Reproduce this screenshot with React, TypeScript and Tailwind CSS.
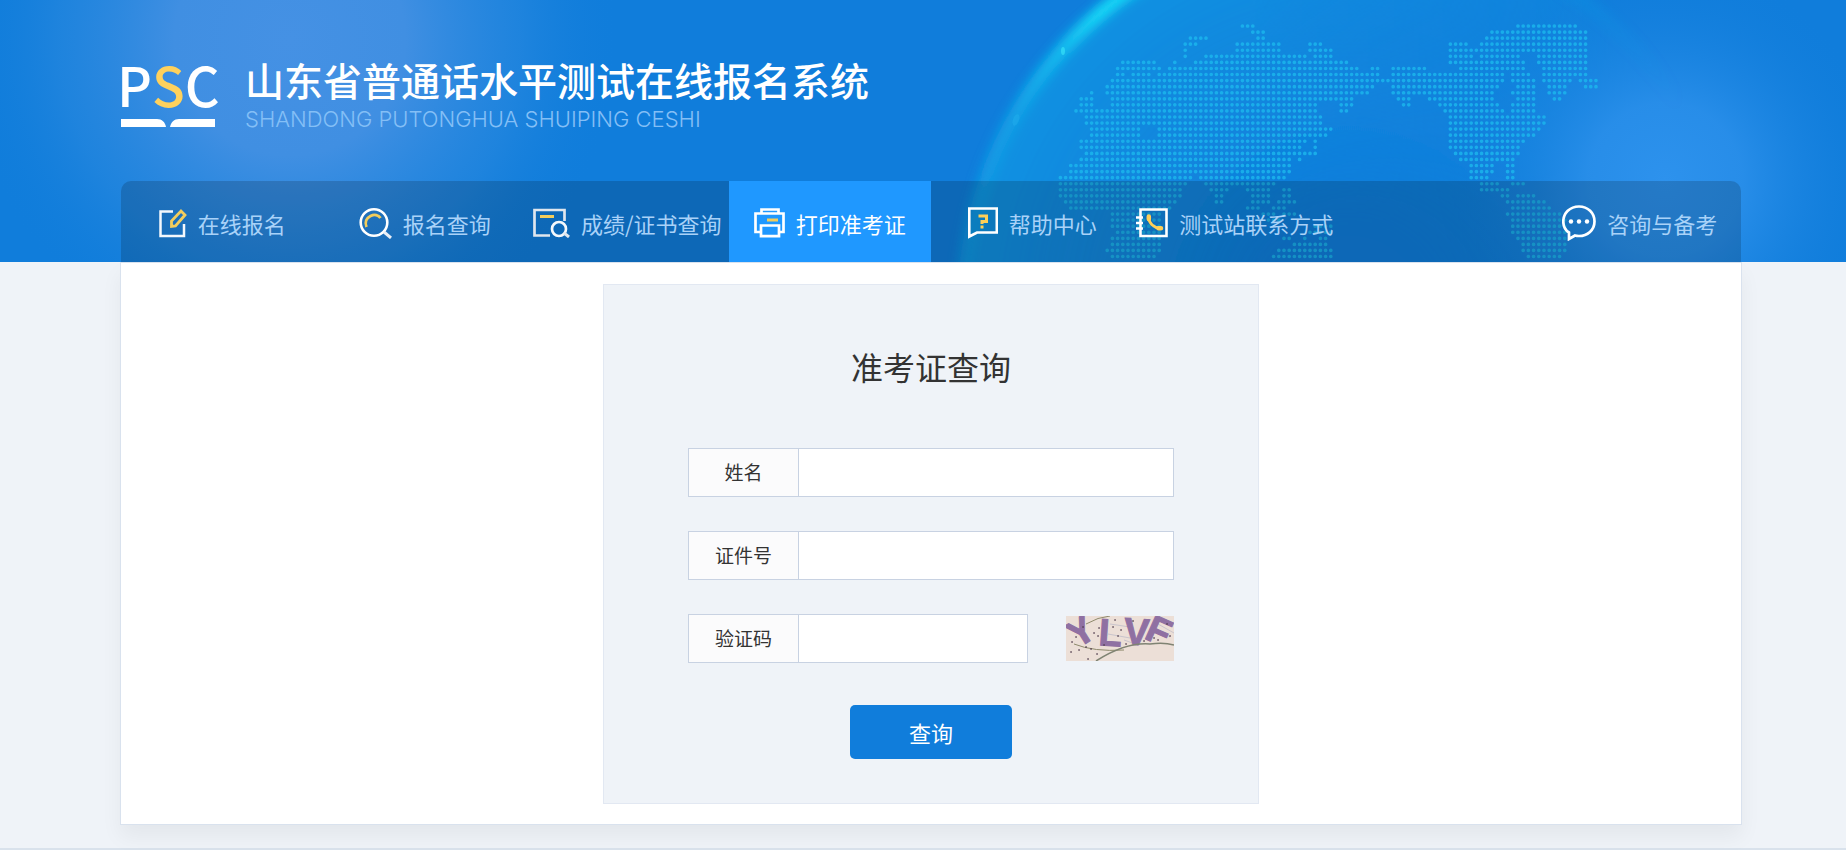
import React from 'react';

type Run = [number, number];

// dotted world map, one entry per row of dots: [first x, last x] of each run
const mapRows: Run[][] = [
  [[575, 615], [1400, 1580]],
  [[605, 645], [1324, 1605]],
  [[415, 470], [620, 645], [1317, 1605]],
  [[400, 440], [562, 688], [775, 815], [1207, 1243], [1297, 1384], [1411, 1609]],
  [[400, 405], [562, 688], [780, 845], [1207, 1277], [1297, 1397], [1424, 1612]],
  [[400, 405], [472, 500], [518, 760], [790, 845], [1207, 1270], [1297, 1411], [1464, 1612]],
  [[215, 318], [370, 375], [430, 885], [1196, 1283], [1297, 1417], [1464, 1612]],
  [[200, 335], [355, 920], [965, 990], [1036, 1123], [1230, 1424], [1478, 1605]],
  [[200, 225], [245, 300], [335, 980], [1036, 1364], [1384, 1437], [1484, 1605]],
  [[185, 250], [265, 1364], [1384, 1451], [1484, 1558], [1594, 1638]],
  [[168, 230], [245, 970], [1036, 1344], [1397, 1444], [1491, 1545], [1604, 1638]],
  [[120, 125], [168, 950], [1036, 1330], [1391, 1444], [1498, 1538]],
  [[88, 130], [180, 865], [875, 905], [1049, 1083], [1143, 1330], [1397, 1451], [1511, 1528]],
  [[88, 130], [180, 800], [870, 900], [1067, 1072], [1167, 1344], [1391, 1457]],
  [[72, 790], [875, 890], [1183, 1364], [1391, 1457]],
  [[103, 810], [1196, 1478]],
  [[103, 810], [1196, 1478]],
  [[118, 270], [320, 790], [800, 835], [1207, 1464]],
  [[118, 265], [335, 775], [790, 825], [1207, 1444]],
  [[88, 740], [750, 760], [790, 795], [1207, 1417]],
  [[88, 755], [790, 795], [1207, 1397]],
  [[103, 715], [735, 800], [1217, 1397]],
  [[88, 715], [750, 755], [1237, 1391]],
  [[55, 715], [1259, 1324], [1377, 1387]],
  [[55, 375], [395, 715], [1259, 1324], [1377, 1387]],
  [[38, 420], [460, 700], [1259, 1317], [1380, 1390]],
  [[38, 400], [475, 665], [1290, 1337], [1391, 1417]],
  [[38, 385], [485, 535], [590, 650], [705, 715], [1297, 1371]],
  [[38, 385], [500, 520], [605, 650], [705, 725], [1364, 1370], [1397, 1457]],
  [[50, 380], [500, 520], [605, 650], [680, 740], [1377, 1478]],
  [[70, 365], [590, 620], [670, 700], [1384, 1498]],
  [[180, 330], [640, 670], [700, 730], [1377, 1524]],
  [[180, 330], [660, 690], [1384, 1545]],
  [[180, 330], [800, 850], [1384, 1545]],
  [[195, 330], [780, 840], [1391, 1551]],
  [[185, 325], [705, 725], [765, 770], [805, 830], [1404, 1551]],
  [[190, 325], [735, 825], [1417, 1545]],
  [[175, 320], [690, 835], [1427, 1545]],
  [[190, 310], [675, 840], [1431, 1531]],
];

const STEP_X = 15.6;
const STEP_Y = 18.2;

const mapPath = mapRows
  .map((runs, row) =>
    runs
      .map(([from, to]) => {
        const first = Math.round(from / STEP_X);
        const last = Math.max(first, Math.round(to / STEP_X));
        let d = '';
        for (let col = first; col <= last; col++) {
          d += `M${(col * STEP_X).toFixed(1)} ${(18 + row * STEP_Y).toFixed(1)}h.1`;
        }
        return d;
      })
      .join('')
  )
  .join('');

const HeaderArt: React.FC = () => (
  <svg className="absolute inset-0 h-full w-full" viewBox="0 0 1846 262" preserveAspectRatio="xMidYMin slice" aria-hidden="true">
    <defs>
      <radialGradient id="glowLeft" gradientUnits="userSpaceOnUse" cx="290" cy="40" r="330">
        <stop offset="0" stopColor="#4591e4" />
        <stop offset="0.35" stopColor="#408fe2" />
        <stop offset="0.7" stopColor="#2888df" stopOpacity="0.6" />
        <stop offset="1" stopColor="#107ddb" stopOpacity="0" />
      </radialGradient>
      <radialGradient id="glowRight" gradientUnits="userSpaceOnUse" cx="1665" cy="180" r="220">
        <stop offset="0" stopColor="#2d92ed" />
        <stop offset="0.35" stopColor="#2a8fea" stopOpacity="0.9" />
        <stop offset="1" stopColor="#107ddb" stopOpacity="0" />
      </radialGradient>
      <radialGradient id="globe" gradientUnits="userSpaceOnUse" cx="1350" cy="310" r="393">
        <stop offset="0.2" stopColor="#1296e2" stopOpacity="0" />
        <stop offset="0.8" stopColor="#1296e2" stopOpacity="0.7" />
        <stop offset="1" stopColor="#149fe6" stopOpacity="0.8" />
      </radialGradient>
      <linearGradient id="rim" gradientUnits="userSpaceOnUse" x1="950" y1="0" x2="1680" y2="0">
        <stop offset="0" stopColor="#18b4ee" stopOpacity="0.1" />
        <stop offset="0.08" stopColor="#18c4f2" stopOpacity="0.35" />
        <stop offset="0.2" stopColor="#14e4fa" />
        <stop offset="0.32" stopColor="#14e4fa" />
        <stop offset="0.6" stopColor="#18b4ee" stopOpacity="0.5" />
        <stop offset="1" stopColor="#18a4ea" stopOpacity="0" />
      </linearGradient>
      <linearGradient id="globeFade" gradientUnits="userSpaceOnUse" x1="950" y1="0" x2="1700" y2="0">
        <stop offset="0" stopColor="#fff" stopOpacity="0.8" />
        <stop offset="0.4" stopColor="#fff" stopOpacity="0.8" />
        <stop offset="1" stopColor="#fff" stopOpacity="0" />
      </linearGradient>
      <mask id="globeMask">
        <rect width="1846" height="262" fill="url(#globeFade)" />
      </mask>
      <filter id="soft" x="-10%" y="-10%" width="120%" height="120%">
        <feGaussianBlur stdDeviation="6" />
      </filter>
    </defs>
    <rect width="1846" height="262" fill="#107ddb" />
    <rect width="700" height="262" fill="url(#glowLeft)" />
    <g mask="url(#globeMask)">
      <circle cx="1350" cy="310" r="393" fill="url(#globe)" filter="url(#soft)" />
    </g>
    <rect x="1400" width="446" height="262" fill="url(#glowRight)" />
    <circle cx="1350" cy="310" r="388" fill="none" stroke="url(#rim)" strokeWidth="12" filter="url(#soft)" />
    <ellipse cx="1063" cy="51" rx="2" ry="4" fill="#3ce6fa" opacity="0.6" />
    <ellipse cx="1016" cy="120" rx="3" ry="6" fill="#2cb8f2" opacity="0.3" transform="rotate(20 1016 120)" />
    <g transform="translate(1050 20) scale(0.3333)">
      <path d={mapPath} stroke="#1cb8ee" strokeWidth="11" strokeLinecap="round" opacity="0.8" />
    </g>
  </svg>
);

const Logo: React.FC = () => (
  <div className="flex w-24 flex-col">
    <div className="-ml-1 flex h-[54px] items-center font-['Noto_Sans_CJK_SC',sans-serif] text-[54px] leading-none font-medium">
      <span>P</span>
      <span className="text-[#ffd15c]">S</span>
      <span>C</span>
    </div>
    <svg className="mt-2 h-2 w-[94px]" viewBox="0 0 94 8" fill="#fff" aria-hidden="true">
      <path d="M0 0h36c5 0 8 3 9 8H0z" />
      <path d="M94 0H58c-5 0-8 3-9 8h45z" />
    </svg>
  </div>
);

const EditIcon = () => (
  <svg width="28" height="30" viewBox="0 0 28 30" fill="none" strokeWidth="2.5" aria-hidden="true">
    <path d="M14 3.500H1.500v24.500h23.500V16" stroke="#f4f8fc" />
    <path d="M12.500 18.500v-5.500L22 3l4 4-9.500 11z" stroke="#f3cd5c" strokeWidth="2.8" />
  </svg>
);

const SearchIcon = () => (
  <svg width="33" height="32" viewBox="0 0 33 32" fill="none" aria-hidden="true">
    <circle cx="15" cy="15.500" r="13.300" stroke="#fff" strokeWidth="2.600" />
    <path d="M25 25l7 6" stroke="#e8eef6" strokeWidth="3" />
    <path d="M7.500 20c-2-5 0-9 4-11 4-2 8-1 10 2" stroke="#f3cd5c" strokeWidth="2.800" />
  </svg>
);

const ScoreIcon = () => (
  <svg width="37" height="30" viewBox="0 0 37 30" fill="none" aria-hidden="true">
    <path d="M17 27.500H1.500V2h30v11" stroke="#dfe6ee" strokeWidth="2.700" />
    <path d="M7 8.500h14" stroke="#f3cd5c" strokeWidth="3" />
    <circle cx="26" cy="21" r="7" stroke="#f4f8fc" strokeWidth="2.700" />
    <path d="M31 25l5 4" stroke="#dfe6ee" strokeWidth="3" />
  </svg>
);

const PrintIcon = () => (
  <svg width="31" height="30" viewBox="0 0 31 30" fill="none" stroke="#fff" strokeWidth="2.700" aria-hidden="true">
    <path d="M7.500 5V1.500h17V5" />
    <path d="M7 24H1.500V5.500h28V24H25" />
    <path d="M7 17.500h18v10.700H7z" />
    <path d="M13 12h11" stroke="#f3cd5c" strokeWidth="3" />
  </svg>
);

const HelpIcon = () => (
  <svg width="30" height="32" viewBox="0 0 30 32" fill="none" aria-hidden="true">
    <path d="M1.300 29.500V1.500h27.500v24H9z" stroke="#fff" strokeWidth="2.600" />
    <path d="M10.500 9h8v5.500H14V17M14 18.500v3" stroke="#ffcf58" strokeWidth="3" />
  </svg>
);

const ContactIcon = () => (
  <svg width="32" height="30" viewBox="0 0 32 30" fill="none" aria-hidden="true">
    <path d="M4.500 1.500h26v26.500h-26z" stroke="#fff" strokeWidth="2.600" />
    <path d="M0 9.500h7M0 15h7M0 20.500h7" stroke="#fff" strokeWidth="2.400" />
    <path d="M12.500 9c.5 6 5 10.500 12 11.500" stroke="#ffcf58" strokeWidth="3" />
    <path d="M12.800 8.500v2.500M22.500 20.200h2.500" stroke="#ffcf58" strokeWidth="4.500" strokeLinecap="round" />
  </svg>
);

const ChatIcon = () => (
  <svg width="34" height="36" viewBox="0 0 34 36" fill="none" aria-hidden="true">
    <path d="M7 27.500C3 25 1.300 21 1.300 16.500 1.300 8 8 1.500 17 1.500S32.500 8 32.500 16.500 25.500 31 17 31c-1.500 0-3-.2-4-.5L7 34z" stroke="#fff" strokeWidth="2.700" />
    <g fill="#fff">
      <circle cx="9" cy="16.500" r="2.200" />
      <circle cx="17" cy="16.500" r="2.200" />
      <circle cx="25" cy="16.500" r="2.200" />
    </g>
  </svg>
);

interface NavItem {
  label: string;
  Icon: React.FC;
  active?: boolean;
  last?: boolean;
}

const navItems: NavItem[] = [
  { label: '在线报名', Icon: EditIcon },
  { label: '报名查询', Icon: SearchIcon },
  { label: '成绩/证书查询', Icon: ScoreIcon },
  { label: '打印准考证', Icon: PrintIcon, active: true },
  { label: '帮助中心', Icon: HelpIcon },
  { label: '测试站联系方式', Icon: ContactIcon },
  { label: '咨询与备考', Icon: ChatIcon, last: true },
];

const Captcha: React.FC = () => (
  <svg width="108" height="45" viewBox="0 0 108 45" role="img" aria-label="验证码">
    <rect width="108" height="45" fill="#ecdfd7" />
    <path d="M20 8Q32 1 44 0M8 28q20 8 50 6" stroke="#8e8a6c" fill="none" />
    <path d="M42 18l22 4M44 8l20 3M92 8l16 9M90 12l14 9M58 24l14 5" stroke="#c9c4cc" fill="none" />
    <g fill="#8f70a2" stroke="#8f70a2" fontFamily="Liberation Sans, sans-serif" fontWeight="bold" fontSize="38">
      <text transform="translate(11 33) rotate(-32)">Y</text>
      <text transform="translate(32 29) rotate(4)">L</text>
      <text transform="translate(57 28) rotate(4)">V</text>
      <text transform="translate(77 22) rotate(24)">F</text>
    </g>
    <path d="M30 45Q60 26 84 28q14-2 24 1" stroke="#7f8373" strokeWidth="1.500" fill="none" />
    <path
      d="M6 26h.1M13 34h.1M20 31h.1M22 43h.1M31 38h.1M32 20h.1M28 17h.1M38 29h.1M47 11h.1M49 4h.1M55 14h.1M52 20h.1M60 28h.1M25 33h.1M10 21h.1M88 22h.1M101 8h.1M104 20h.1M92 24h.1M78 25h.1M67 5h.1M33 12h.1M5 36h.1M17 11h.1"
      stroke="#4c3a4a"
      strokeWidth="1.300"
      strokeLinecap="square"
    />
  </svg>
);

interface FieldProps {
  id: string;
  label: string;
}

const Field: React.FC<FieldProps> = ({ id, label }) => (
  <div className="flex h-[49px] flex-1 border border-[#c8d2e2] bg-white">
    <label htmlFor={id} className="flex w-[110px] shrink-0 items-center justify-center border-r border-[#c8d2e2] bg-[#fbfbfc] text-[19px] text-[#333]">
      {label}
    </label>
    <input id={id} type="text" className="w-full min-w-0 px-3 text-[19px] text-[#333] outline-none" />
  </div>
);

const App: React.FC = () => {
  return (
    <div className="bg-white font-['Noto_Sans_CJK_SC',sans-serif]">
      <header className="relative overflow-hidden bg-[#107ddb] pl-4">
        <HeaderArt />
        <div className="relative mx-auto max-w-[1620px]">
          <div className="flex h-[181px] items-start gap-7 pt-[57px] text-white">
            <Logo />
            <div>
              <h1 className="text-[39px] leading-[44px] font-medium">山东省普通话水平测试在线报名系统</h1>
              <p className="font-['Inter',sans-serif] text-[22px] leading-[36px] font-light text-[#84bff6]">SHANDONG PUTONGHUA SHUIPING CESHI</p>
            </div>
          </div>
          <nav className="flex h-[81px] overflow-hidden rounded-t-[10px] bg-black/16">
            {navItems.map(({ label, Icon, active, last }) => (
              <a
                key={label}
                href="#"
                className={`flex w-[12.5%] items-center justify-center gap-[11px] pt-[3px] text-[22px] whitespace-nowrap ${active ? 'bg-[#1f98ff] text-white' : 'text-[#a9d2f8]'} ${last ? 'ml-auto' : ''}`}
              >
                <Icon />
                <span>{label}</span>
              </a>
            ))}
          </nav>
        </div>
      </header>

      <main className="border-b-2 border-[#d9e2ec] bg-[#eff3f8] pb-[23px] pl-4">
        <div className="mx-auto max-w-[1622px] border border-[#d9e2ee] bg-white pt-[21px] pb-5 shadow-[0_12px_20px_rgba(0,0,0,0.05)]">
          <form className="mx-auto flex w-[656px] flex-col items-center border border-[#e2e8f2] bg-[#eff3f8] px-[84px] pt-[57px] pb-11" onSubmit={(e) => e.preventDefault()}>
            <h2 className="text-[32px] leading-12 text-[#333]">准考证查询</h2>
            <div className="mt-[58px] flex w-full flex-col gap-[34px]">
              <div className="flex">
                <Field id="name" label="姓名" />
              </div>
              <div className="flex">
                <Field id="idNumber" label="证件号" />
              </div>
              <div className="flex items-center gap-[38px]">
                <Field id="captcha" label="验证码" />
                <Captcha />
              </div>
            </div>
            <button type="submit" className="mt-[42px] h-[54px] w-[162px] rounded-[5px] bg-[#107ddb] text-[22px] text-white">
              查询
            </button>
          </form>
        </div>
      </main>
    </div>
  );
};

export default App;
